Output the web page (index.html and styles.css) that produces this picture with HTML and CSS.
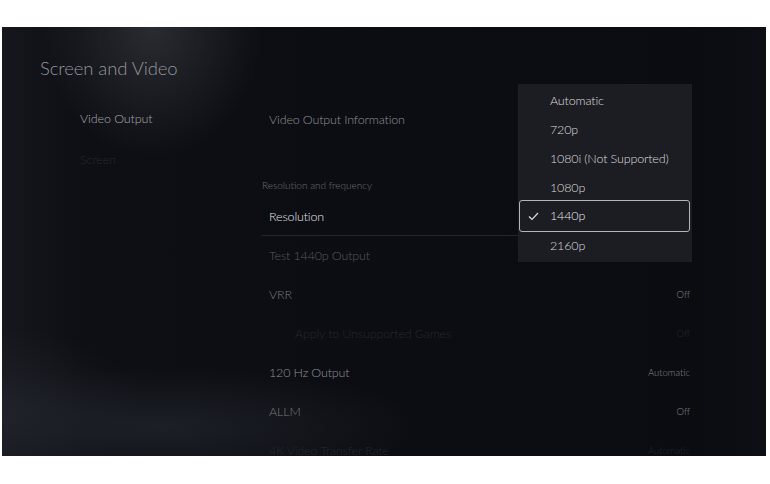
FILE: index.html
```html
<!DOCTYPE html>
<html lang="en">
<head>
  <meta charset="UTF-8">
  <meta name="viewport" content="width=device-width, initial-scale=1.0">
  <title>Screen and Video</title>
  <link rel="stylesheet" href="styles.css">
</head>
<body>

  <div class="screen">
    <h1 class="title">Screen and Video</h1>

    <div class="layout">
      <ul class="nav">
        <li class="nav-item active">Video Output</li>
        <li class="nav-item dim">Screen</li>
      </ul>

      <div class="settings">
        <div class="row">
          <span class="label mid">Video Output Information</span>
        </div>

        <div class="section">Resolution and frequency</div>

        <div class="row focused">
          <span class="label bright">Resolution</span>
        </div>
        <div class="row">
          <span class="label faint">Test 1440p Output</span>
        </div>
        <div class="row">
          <span class="label low">VRR</span>
          <span class="value">Off</span>
        </div>
        <div class="row sub">
          <span class="label ghost">Apply to Unsupported Games</span>
          <span class="value ghost">Off</span>
        </div>
        <div class="row">
          <span class="label mid">120 Hz Output</span>
          <span class="value">Automatic</span>
        </div>
        <div class="row">
          <span class="label low">ALLM</span>
          <span class="value">Off</span>
        </div>
        <div class="row">
          <span class="label ghost">4K Video Transfer Rate</span>
          <span class="value ghost">Automatic</span>
        </div>
      </div>
    </div>

    <ul class="menu">
      <li class="option">Automatic</li>
      <li class="option">720p</li>
      <li class="option">1080i (Not Supported)</li>
      <li class="option">1080p</li>
      <li class="option selected">
        <svg class="check" width="11" height="9" viewBox="0 0 11 9">
          <polyline points="1,4.5 4,7.5 10,1" fill="none" stroke="#dcdcde" stroke-width="1.2"/>
        </svg>
        1440p
      </li>
      <li class="option">2160p</li>
    </ul>
  </div>

</body>
</html>
```

FILE: styles.css
```css
body {
  margin: 0;
  background-color: #ffffff;
  font-family: Lato, "Open Sans", sans-serif;
  font-weight: 300;
}

.screen {
  position: relative;
  margin: 27px 0 0 2px;
  width: 764px;
  height: 429px;
  overflow: hidden;
  background-color: #0b0d12;
  background-image:
    radial-gradient(ellipse 110px 130px at 150px 0px, rgba(70, 72, 80, 0.5), rgba(70, 72, 80, 0) 100%),
    radial-gradient(ellipse 260px 60px at 160px 400px, rgba(40, 42, 52, 0.6), rgba(40, 42, 52, 0) 100%),
    radial-gradient(ellipse 140px 80px at 0px 380px, rgba(40, 42, 52, 0.5), rgba(40, 42, 52, 0) 100%),
    linear-gradient(90deg, #15171c 0px, #0d0f14 80px, #0b0d12 400px, #0a0c11 700px, #0d0f14 764px);
}

.title {
  margin: 0;
  padding: 28.5px 0 0 38px;
  font-size: 18.5px;
  line-height: 24px;
  font-weight: 300;
  letter-spacing: -0.1px;
  color: #92959c;
}

.layout {
  display: flex;
  margin-top: 20.5px;
}

.nav {
  list-style: none;
  margin: 0;
  padding: 0 0 0 78px;
  width: 182px;
}

.nav-item {
  height: 41px;
  line-height: 38px;
  font-size: 12.5px;
  letter-spacing: -0.1px;
}

.nav-item.active {
  color: #a6a8ae;
}

.nav-item.dim {
  color: #272930;
}

.settings {
  width: 428px;
}

.row {
  display: flex;
  justify-content: space-between;
  align-items: center;
  height: 39px;
  padding-left: 7px;
  font-size: 12.5px;
  letter-spacing: -0.15px;
}

.row.focused {
  border-bottom: 1px solid #25272c;
  height: 38px;
}

.row.sub {
  padding-left: 33px;
}

.section {
  margin-top: 36px;
  height: 22px;
  line-height: 21px;
  font-size: 10px;
  color: #6c6f76;
}

.label.bright { color: #e4e4e6; }
.label.mid { color: #8e9198; }
.label.low { color: #767980; }
.label.faint { color: #55585e; }
.label.ghost { color: #26282e; }

.value {
  font-size: 9.5px;
  letter-spacing: 0;
  color: #85888e;
}

.value.ghost {
  color: #24262c;
}

.menu {
  position: absolute;
  left: 516px;
  top: 57px;
  width: 174px;
  height: 178px;
  margin: 0;
  padding: 1.5px 0 0;
  box-sizing: border-box;
  list-style: none;
  background-color: #1c1d22;
}

.option {
  height: 29px;
  line-height: 29px;
  padding-left: 32px;
  font-size: 12.5px;
  letter-spacing: -0.15px;
  color: #dcdcde;
}

.option.selected {
  position: relative;
  height: 30px;
  line-height: 30px;
  margin: -1.5px 2px -1.5px 1px;
  padding-left: 30px;
  border: 1px solid #b4b5b9;
  border-radius: 3px;
  color: #e8e8ea;
}

.check {
  position: absolute;
  left: 8px;
  top: 11px;
}
```
